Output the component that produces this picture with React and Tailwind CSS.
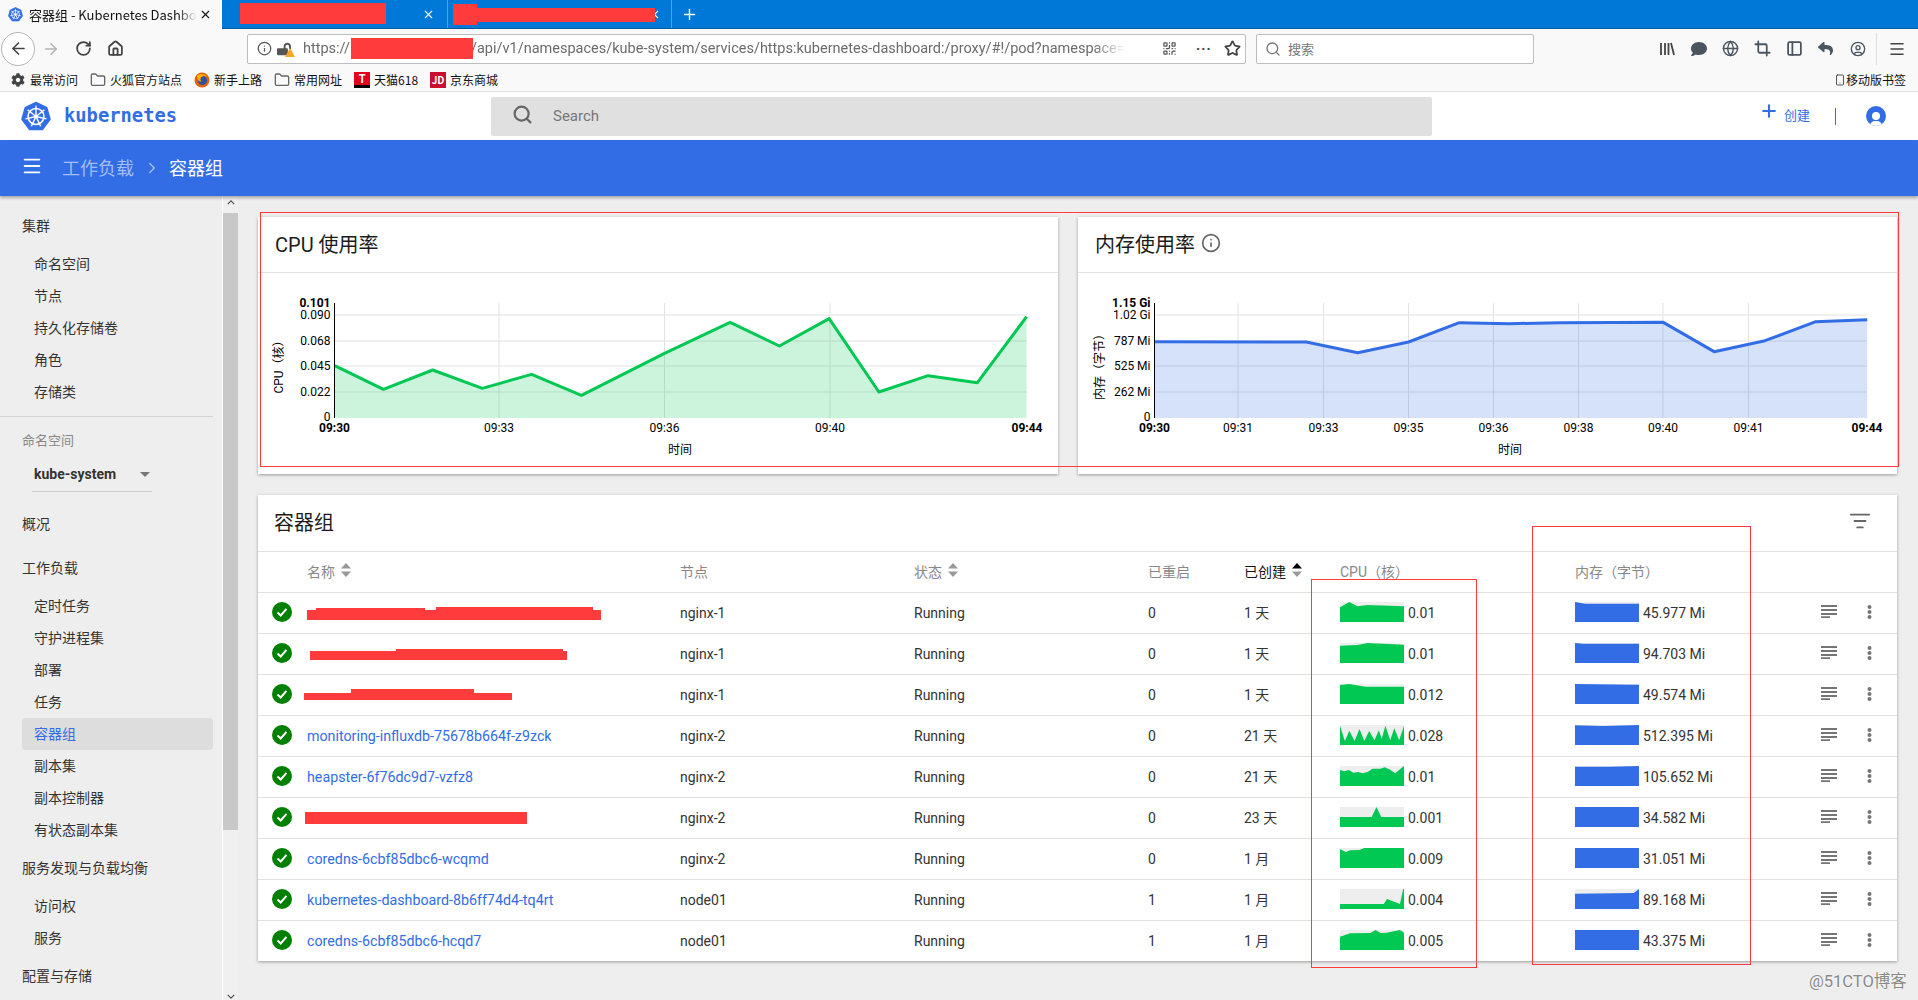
import { ArrowLeft, ArrowRight, RotateCw, Home, Info, Star, Search, Plus, X, Menu, ChevronRight, Crop, Globe, PanelLeft, Folder, Smartphone, ListFilter, QrCode, CircleUser } from 'lucide-react';
import { FaComment, FaReply, FaCog, FaLockOpen } from 'react-icons/fa';

const clusterItems = ['命名空间', '节点', '持久化存储卷', '角色', '存储类'];
const workloadItems = ['定时任务', '守护进程集', '部署', '任务', '容器组', '副本集', '副本控制器', '有状态副本集'];

const pods = [
  { name: '', node: 'nginx-1', restarts: 0, age: '1 天', cpu: '0.01', mem: '45.977 Mi', cpuShape: '0,16 23,0 43,13 68,9 158,13', memShape: '0,0 25,5 158,5' },
  { name: '', node: 'nginx-1', restarts: 0, age: '1 天', cpu: '0.01', mem: '94.703 Mi', cpuShape: '0,8 43,6 68,0 158,5', memShape: '0,0 20,2 158,2' },
  { name: '', node: 'nginx-1', restarts: 0, age: '1 天', cpu: '0.012', mem: '49.574 Mi', cpuShape: '0,3 23,0 63,8 158,8', memShape: '0,0 158,2' },
  { name: 'monitoring-influxdb-75678b664f-z9zck', node: 'nginx-2', restarts: 0, age: '21 天', cpu: '0.028', mem: '512.395 Mi', cpuShape: '0,2 12,48 23,17 36,48 48,12 60,48 72,18 85,46 96,16 103,42 112,2 124,46 134,10 146,46 158,2', memShape: '0,1 70,3 158,0' },
  { name: 'heapster-6f76dc9d7-vzfz8', node: 'nginx-2', restarts: 0, age: '21 天', cpu: '0.01', mem: '105.652 Mi', cpuShape: '0,12 10,16 22,12 33,20 45,18 56,22 68,18 80,8 100,8 110,4 122,10 136,22 158,0', memShape: '0,2 80,2 158,0' },
  { name: '', node: 'nginx-2', restarts: 0, age: '23 天', cpu: '0.001', mem: '34.582 Mi', cpuShape: '0,30 78,30 90,0 102,30 158,30', memShape: '0,0 158,0' },
  { name: 'coredns-6cbf85dbc6-wcqmd', node: 'nginx-2', restarts: 0, age: '1 月', cpu: '0.009', mem: '31.051 Mi', cpuShape: '0,4 15,12 25,7 48,6 60,0 158,0', memShape: '0,0 158,0' },
  { name: 'kubernetes-dashboard-8b6ff74d4-tq4rt', node: 'node01', restarts: 1, age: '1 月', cpu: '0.004', mem: '89.168 Mi', cpuShape: '0,45 108,45 116,30 148,45 156,0 158,0', memShape: '0,14 145,12 158,0' },
  { name: 'coredns-6cbf85dbc6-hcqd7', node: 'node01', restarts: 1, age: '1 月', cpu: '0.005', mem: '43.375 Mi', cpuShape: '0,20 25,10 75,9 88,0 100,9 115,8 148,0 158,8', memShape: '0,0 158,0' },
];

// line points read off the screenshot, page coordinates
const cpuLine = [[160, 497], [252, 568], [345, 510], [439, 565], [532, 523], [626, 586], [783, 460], [907, 367], [1000, 438], [1094, 356], [1188, 576], [1281, 527], [1374, 548], [1467, 350]]
  .map(([x, y]) => [250 + x / 1.889, 200 + y / 3]);
const memLine = [[156, 425], [437, 426], [532, 458], [626, 426], [720, 368], [813, 371], [907, 368], [1097, 367], [1191, 455], [1285, 422], [1379, 365], [1474, 359]]
  .map(([x, y]) => [1070 + x / 1.849, 200 + y / 3]);

const cpuChart = {
  viewBox: '258 273 800 201', axisX: 334.5, right: 1027, color: '#00c853', line: cpuLine, yTitle: 'CPU（核）', yTitleX: 279, xTitleX: 680,
  yTicks: [['0.101', 303, true], ['0.090', 315], ['0.068', 341], ['0.045', 366], ['0.022', 392], ['0', 417]],
  xTicks: [['09:30', 334.5, true], ['09:33', 499], ['09:36', 664.5], ['09:40', 830], ['09:44', 1027, true]],
};
const memChart = {
  viewBox: '1078 273 819 201', axisX: 1154.5, right: 1867, color: '#326de6', line: memLine, yTitle: '内存（字节）', yTitleX: 1100, xTitleX: 1510,
  yTicks: [['1.15 Gi', 303, true], ['1.02 Gi', 315], ['787 Mi', 341], ['525 Mi', 366], ['262 Mi', 392], ['0', 417]],
  xTicks: [['09:30', 1154.5, true], ['09:31', 1238], ['09:33', 1323.5], ['09:35', 1408.5], ['09:36', 1493.5], ['09:38', 1578.5], ['09:40', 1663], ['09:41', 1748.5], ['09:44', 1867, true]],
};

function KubeLogo({ className }) {
  const spokes = [0, 51.4, 102.8, 154.3, 205.7, 257.1, 308.6];
  return (
    <svg viewBox="0 0 32 32" className={className}>
      <path d="M16 1 L27.5 6.6 L31 19 L23 29.8 L9 29.8 L1 19 L4.5 6.6 Z" fill="#326de6" stroke="#326de6" strokeWidth="1.5" strokeLinejoin="round" />
      <circle cx="16" cy="16" r="8.5" fill="none" stroke="#fff" strokeWidth="1.6" />
      <circle cx="16" cy="16" r="2" fill="#fff" />
      {spokes.map((a) => (
        <line key={a} x1="16" y1="16" x2="16" y2="4.5" stroke="#fff" strokeWidth="1.5" transform={`rotate(${a} 16 16)`} />
      ))}
    </svg>
  );
}

function FirefoxIcon() {
  return (
    <svg viewBox="0 0 16 16" className="ml-[12px] w-[16px] h-[16px]">
      <circle cx="8" cy="8" r="7.5" fill="#e66000" />
      <circle cx="8.5" cy="8.5" r="4.6" fill="#2f4f9f" />
      <path d="M3 3.5 C6 1 11 1.5 13.5 5 C11 3.5 9 3.8 7.5 5 C6 6 6 8 7.5 9.5 C5 10 3 8 3 3.5 Z" fill="#ffb000" />
    </svg>
  );
}

function SortArrows({ active }) {
  return (
    <svg viewBox="0 0 10 14" className="w-[10px] h-[14px] ml-[6px] -mt-1">
      <path d="M5 0 L10 5.5 L0 5.5 Z" fill={active ? '#000' : '#999'} />
      <path d="M5 14 L10 8.5 L0 8.5 Z" fill="#999" />
    </svg>
  );
}

function UsageChart({ chart }) {
  const { viewBox, axisX, right, color, line, yTicks, xTicks } = chart;
  const points = line.map((p) => p.join(',')).join(' ');
  const area = `${line[0][0]},418 ${points} ${line[line.length - 1][0]},418`;
  return (
    <svg viewBox={viewBox} className="block w-full h-[201px] text-[12px]">
      {yTicks.slice(1, 5).map(([label, y]) => (
        <line key={label} x1={axisX} x2={right} y1={y} y2={y} stroke="#e2e2e2" />
      ))}
      {xTicks.slice(1, -1).map(([label, x]) => (
        <line key={label} x1={x} x2={x} y1={303} y2={418} stroke="#e2e2e2" />
      ))}
      <polygon points={area} fill={color} fillOpacity="0.2" />
      <polyline points={points} fill="none" stroke={color} strokeWidth="3" strokeLinejoin="round" />
      <line x1={axisX} x2={axisX} y1={303} y2={418} stroke="#000" />
      {yTicks.map(([label, y, bold]) => (
        <text key={label} x={axisX - 4} y={y + 4} textAnchor="end" fill="#000" fontWeight={bold ? 700 : 400}>{label}</text>
      ))}
      {xTicks.map(([label, x, bold]) => (
        <text key={label} x={x} y={432} textAnchor="middle" fill="#000" fontWeight={bold ? 700 : 400}>{label}</text>
      ))}
      <text x={chart.xTitleX} y={454} textAnchor="middle" fill="#000">时间</text>
      <text transform={`translate(${chart.yTitleX + 4} 364) rotate(-90)`} textAnchor="middle" fill="#000">{chart.yTitle}</text>
    </svg>
  );
}

function Sparkline({ shape, color }) {
  return (
    <svg viewBox="0 0 158 60" preserveAspectRatio="none" className="w-[64px] h-[20px] -mt-[2px] bg-[#eeeeee] shrink-0">
      <polygon points={`0,60 ${shape} 158,60`} fill={color} />
    </svg>
  );
}

function SideHeading({ children }) {
  return <div className="h-[32px] my-[6px] pl-[22px] flex items-center">{children}</div>;
}

function SideItem({ label, active }) {
  return (
    <div className={`h-[32px] ml-[22px] w-[191px] pl-[12px] flex items-center rounded-sm ${active ? 'bg-[#dddddd] text-[#326de6]' : ''}`}>
      {label}
    </div>
  );
}

function Sidebar() {
  return (
    <aside className="w-[222px] shrink-0 pt-[8px] flex flex-col text-[14px] text-[#333333]">
      <SideHeading>集群</SideHeading>
      {clusterItems.map((i) => <SideItem key={i} label={i} />)}
      <div className="mt-[8px] h-px w-[213px] bg-[#d4d4d4]" />
      <div className="mt-[8px] h-[32px] pl-[22px] flex items-center text-[13px] text-[#888888]">命名空间</div>
      <div className="ml-[32px] w-[120px] h-[35px] pl-[2px] pr-[2px] flex items-center justify-between border-b border-[#cccccc] font-bold">
        <span>kube-system</span>
        <span className="w-0 h-0 border-x-[5px] border-x-transparent border-t-[5px] border-t-[#777777]" />
      </div>
      <div className="mt-[10px]" />
      <SideHeading>概况</SideHeading>
      <SideHeading>工作负载</SideHeading>
      {workloadItems.map((i) => <SideItem key={i} label={i} active={i === '容器组'} />)}
      <SideHeading>服务发现与负载均衡</SideHeading>
      <SideItem label="访问权" />
      <SideItem label="服务" />
      <SideHeading>配置与存储</SideHeading>
    </aside>
  );
}

function Scrollbar() {
  return (
    <div className="w-[16px] shrink-0 border-l border-white bg-[#f0f0f0] flex flex-col items-center">
      <svg viewBox="0 0 10 6" className="w-[8px] h-[5px] mt-[4px] mb-[8px]"><path d="M1 5 L5 1 L9 5" fill="none" stroke="#555" strokeWidth="1.6" /></svg>
      <div className="w-full h-[617px] bg-[#c8c8c8]" />
      <div className="flex-1" />
      <svg viewBox="0 0 10 6" className="w-[8px] h-[5px] mb-[1px]"><path d="M1 1 L5 5 L9 1" fill="none" stroke="#555" strokeWidth="1.6" /></svg>
    </div>
  );
}

function Card({ title, extra, className, children }) {
  return (
    <section className={`bg-white shadow-[0_1px_3px_rgba(0,0,0,0.35)] ${className}`}>
      <div className="h-[56px] pl-[17px] flex items-center gap-[6px] border-b border-[#e2e2e2] text-[20px] text-[#1c1c1c]">
        <span>{title}</span>
        {extra}
      </div>
      {children}
    </section>
  );
}

function PodTable() {
  const grid = 'grid grid-cols-[49px_373px_234px_234px_96px_96px_235px_246px_48px_1fr] items-center';
  return (
    <section className="relative bg-white shadow-[0_1px_3px_rgba(0,0,0,0.35)] text-[14px]">
      <div className="h-[56px] pl-[16px] flex items-center text-[20px] text-[#1c1c1c]">容器组</div>
      <ListFilter className="absolute right-[26px] top-[15px] w-[22px] h-[22px] text-[#666666]" />
      <div className={`${grid} h-[41px] border-t border-[#e0e0e0] text-[#888888]`}>
        <div />
        <div className="flex items-center">名称<SortArrows /></div>
        <div>节点</div>
        <div className="flex items-center">状态<SortArrows /></div>
        <div>已重启</div>
        <div className="flex items-center text-[#111111]">已创建<SortArrows active /></div>
        <div>CPU（核）</div>
        <div>内存（字节）</div>
        <div />
        <div />
      </div>
      {pods.map((p, i) => (
        <div key={i} className={`${grid} h-[41px] border-t border-[#e0e0e0] text-[#333333]`}>
          <div className="pl-[14px]">
            <span className="w-[20px] h-[20px] rounded-full bg-[#008000] flex items-center justify-center -mt-[3px]">
              <svg viewBox="0 0 12 12" className="w-[12px] h-[12px]"><path d="M1.5 6.5 L4.7 9.5 L10.5 2.8" fill="none" stroke="#fff" strokeWidth="2" /></svg>
            </span>
          </div>
          <div className="pt-[2px] text-[14.25px] text-[#326de6]">{p.name}</div>
          <div>{p.node}</div>
          <div>Running</div>
          <div>{p.restarts}</div>
          <div>{p.age}</div>
          <div className="flex items-center gap-[4px]"><Sparkline shape={p.cpuShape} color="#00c853" />{p.cpu}</div>
          <div className="flex items-center gap-[4px]"><Sparkline shape={p.memShape} color="#326de6" />{p.mem}</div>
          <svg viewBox="0 0 16 13" className="w-[16px] h-[13px] -mt-[3px]">
            <path d="M0 1 H16 M0 5 H16 M0 9 H16 M0 12.2 H9" stroke="#757575" strokeWidth="1.8" />
          </svg>
          <svg viewBox="0 0 5 14" className="w-[5px] h-[14px] -mt-[3px] -ml-[2px]">
            <circle cx="2.5" cy="2" r="2" fill="#757575" /><circle cx="2.5" cy="7" r="2" fill="#757575" /><circle cx="2.5" cy="12" r="2" fill="#757575" />
          </svg>
        </div>
      ))}
    </section>
  );
}

function BrowserChrome() {
  return (
    <div className="font-['Noto_Sans_CJK_SC','Noto_Sans',sans-serif] text-[12px] text-[#111111]">
      {/* tab strip */}
      <div className="h-[29px] bg-[#0078d7] border-b border-[#005a9e] flex items-stretch text-white">
        <div className="w-[222px] h-[29px] bg-[#f9f9f9] text-[#111111] flex items-center pl-[8px] pr-[10px]">
          <KubeLogo className="w-[15px] h-[15px] shrink-0" />
          <span className="ml-[6px] w-[168px] overflow-hidden whitespace-nowrap text-[13px] [mask-image:linear-gradient(to_right,black_88%,transparent)]">容器组 - Kubernetes Dashboard</span>
          <X className="w-[13px] h-[13px] ml-auto shrink-0" />
        </div>
        <div className="w-[226px] flex items-center justify-end pr-[12px] border-r border-[#4da0e3]"><X className="w-[13px] h-[13px]" /></div>
        <div className="w-[224px] flex items-center justify-end pr-[10px] border-r border-[#4da0e3]"><X className="w-[13px] h-[13px]" /></div>
        <div className="pl-[9px] flex items-center"><Plus className="w-[17px] h-[17px]" /></div>
      </div>
      {/* nav toolbar */}
      <div className="h-[39px] bg-[#f9f9f9] flex items-center">
        <div className="ml-[1px] w-[34px] h-[34px] rounded-full border border-[#b5b5b5] bg-white flex items-center justify-center">
          <ArrowLeft className="w-[19px] h-[19px] text-[#444444]" />
        </div>
        <ArrowRight className="ml-[7px] w-[18px] h-[18px] text-[#b3b3b3]" />
        <RotateCw className="ml-[15px] w-[17px] h-[17px] text-[#444444]" strokeWidth={2.5} />
        <Home className="ml-[15px] w-[17px] h-[17px] text-[#444444]" strokeWidth={2.5} />
        <div className="ml-[123px] w-[999px] h-[30px] bg-white border border-[#bdbdbd] rounded-[2px] flex items-center pl-[9px] text-[14.5px] text-[#6b6b6b] font-['Roboto',sans-serif]">
          <Info className="w-[15px] h-[15px] shrink-0 text-[#555555]" />
          <FaLockOpen className="ml-[5px] w-[14px] h-[14px] shrink-0 text-[#555555]" />
          <span className="w-0 h-0 -mb-[7px] -ml-[6px] border-x-[5px] border-x-transparent border-b-[9px] border-b-[#f5a623]" />
          <span className="ml-[8px] pt-[1px] whitespace-nowrap overflow-hidden w-[823px] [mask-image:linear-gradient(to_right,black_96%,transparent)]">https://<span className="inline-block w-[121px]" />/api/v1/namespaces/kube-system/services/https:kubernetes-dashboard:/proxy/#!/pod?namespace=</span>
          <QrCode className="ml-[36px] w-[15px] h-[15px] shrink-0 text-[#555555]" />
          <span className="ml-[19px] text-[#444444] font-bold tracking-[1px] -mt-[6px]">...</span>
          <Star className="ml-[12px] w-[17px] h-[17px] shrink-0 text-[#444444]" strokeWidth={2.5} />
        </div>
        <div className="ml-[10px] w-[278px] h-[30px] bg-white border border-[#bdbdbd] rounded-[2px] flex items-center pl-[8px] text-[13px] text-[#777777]">
          <Search className="w-[16px] h-[16px] text-[#777777]" />
          <span className="ml-[7px]">搜索</span>
        </div>
        <svg viewBox="0 0 16 16" className="ml-[125px] w-[16px] h-[16px]"><path d="M2 2 V14 M6 2 V14 M9.5 2 V14 M12 2 L15 14" stroke="#444" strokeWidth="1.8" fill="none" /></svg>
        <FaComment className="ml-[16px] w-[16px] h-[16px] text-[#4a5560]" />
        <Globe className="ml-[15px] w-[17px] h-[17px] text-[#4a5560]" />
        <Crop className="ml-[15px] w-[17px] h-[17px] text-[#4a5560]" strokeWidth={2.5} />
        <PanelLeft className="ml-[15px] w-[17px] h-[17px] text-[#4a5560]" strokeWidth={2.5} />
        <FaReply className="ml-[15px] w-[15px] h-[15px] text-[#4a5560]" />
        <CircleUser className="ml-[17px] w-[16px] h-[16px] text-[#4a5560]" />
        <div className="ml-[10px] w-px h-[32px] bg-[#dddddd]" />
        <Menu className="ml-[11px] w-[18px] h-[18px] text-[#444444]" />
      </div>
      {/* bookmarks */}
      <div className="h-[24px] bg-[#f9f9f9] border-b border-[#dcdcdc] flex items-center">
        <FaCog className="ml-[11px] w-[14px] h-[14px] text-[#444444]" />
        <span className="ml-[5px]">最常访问</span>
        <Folder className="ml-[12px] w-[16px] h-[16px] text-[#666666]" />
        <span className="ml-[4px]">火狐官方站点</span>
        <FirefoxIcon />
        <span className="ml-[4px]">新手上路</span>
        <Folder className="ml-[12px] w-[16px] h-[16px] text-[#666666]" />
        <span className="ml-[4px]">常用网址</span>
        <span className="ml-[12px] w-[16px] h-[16px] bg-[#e2001a] border-b-[3px] border-black flex items-center justify-center text-white font-bold text-[11px] leading-none">T</span>
        <span className="ml-[4px]">天猫618</span>
        <span className="ml-[12px] w-[16px] h-[16px] bg-[#c8102e] flex items-center justify-center text-white font-bold text-[10px] leading-none">JD</span>
        <span className="ml-[4px]">京东商城</span>
        <Smartphone className="ml-auto w-[12px] h-[16px] text-[#555555]" />
        <span className="mr-[12px]">移动版书签</span>
      </div>
    </div>
  );
}

export default function App() {
  return (
    <div className="relative w-[1918px] h-[1000px] overflow-hidden bg-[#eeeeee] font-['Roboto','Noto_Sans_CJK_SC',sans-serif]">
      <BrowserChrome />

      <header className="h-[48px] bg-white flex items-center">
        <KubeLogo className="ml-[21px] w-[30px] h-[31px]" />
        <span className="ml-[13px] w-[113px] pt-[1px] font-['DejaVu_Sans_Mono',monospace] font-bold text-[18.8px] text-[#326de6]">kubernetes</span>
        <div className="ml-[314px] w-[941px] h-[39px] bg-[#e0e0e0] rounded-[2px] flex items-center pl-[21px] text-[15px] text-[#777777]">
          <Search className="w-[21px] h-[21px] text-[#666666] -mt-[4px]" strokeWidth={2.5} />
          <span className="ml-[20px]">Search</span>
        </div>
        <Plus className="ml-[327px] w-[20px] h-[20px] text-[#326de6] -mt-[10px]" strokeWidth={2.5} />
        <span className="ml-[5px] text-[13px] text-[#326de6]">创建</span>
        <div className="ml-[25px] w-px h-[17px] bg-[#326de6]" />
        <div className="ml-[30px] w-[20px] h-[20px] rounded-full bg-[#326de6] flex flex-col items-center justify-end overflow-hidden">
          <span className="w-[8px] h-[8px] rounded-full bg-white mb-[1px]" />
          <span className="w-[12px] h-[5px] rounded-t-full bg-white" />
        </div>
      </header>

      <div className="relative h-[56px] bg-[#326de6] shadow-[0_2px_3px_rgba(0,0,0,0.3)] flex items-center text-[18px] text-white">
        <Menu className="ml-[21px] w-[22px] h-[22px] -mt-[5px]" />
        <span className="ml-[19px] text-[#a3bef5]">工作负载</span>
        <ChevronRight className="ml-[9px] w-[18px] h-[18px] text-[#a3bef5]" />
        <span className="ml-[8px]">容器组</span>
      </div>

      <div className="flex h-[804px]">
        <Sidebar />
        <Scrollbar />
        <main className="flex-1 pl-[20px] pr-[21px] pt-[21px]">
          <div className="flex gap-[20px] mb-[21px]">
            <Card title="CPU 使用率" className="w-[800px] shrink-0">
              <UsageChart chart={cpuChart} />
            </Card>
            <Card title="内存使用率" className="flex-1" extra={<Info className="w-[20px] h-[20px] text-[#666666] -mt-[3px]" />}>
              <UsageChart chart={memChart} />
            </Card>
          </div>
          <PodTable />
        </main>
      </div>

      {/* red redaction blocks and annotation frames drawn over the screenshot */}
      <div className="absolute left-[240px] top-[3px] w-[146px] h-[21px] bg-[#ff3b3b]" />
      <div className="absolute left-[453px] top-[4px] w-[24px] h-[21px] bg-[#ff3b3b]" />
      <div className="absolute left-[477px] top-[8px] w-[178px] h-[14px] bg-[#ff3b3b]" />
      <div className="absolute left-[351px] top-[38px] w-[122px] h-[21px] bg-[#ff3b3b]" />
      <div className="absolute left-[307px] top-[610px] w-[294px] h-[10px] bg-[#ff3b3b]" />
      <div className="absolute left-[316px] top-[608px] w-[109px] h-[3px] bg-[#ff3b3b]" />
      <div className="absolute left-[436px] top-[607px] w-[157px] h-[4px] bg-[#ff3b3b]" />
      <div className="absolute left-[310px] top-[651px] w-[257px] h-[9px] bg-[#ff3b3b]" />
      <div className="absolute left-[396px] top-[649px] w-[167px] h-[3px] bg-[#ff3b3b]" />
      <div className="absolute left-[304px] top-[693px] w-[208px] h-[7px] bg-[#ff3b3b]" />
      <div className="absolute left-[351px] top-[689px] w-[123px] h-[5px] bg-[#ff3b3b]" />
      <div className="absolute left-[305px] top-[812px] w-[222px] h-[12px] bg-[#ff3b3b]" />
      <div className="absolute left-[260px] top-[212px] w-[1639px] h-[255px] border border-[#ff3b3b]" />
      <div className="absolute left-[1311px] top-[579px] w-[166px] h-[389px] border border-[#ff3b3b]" />
      <div className="absolute left-[1532px] top-[526px] w-[219px] h-[439px] border border-[#ff3b3b]" />

      <div className="absolute left-[1809px] top-[970px] text-[16.5px] text-[#8a8a8a] [text-shadow:0_0_2px_#fff]">@51CTO博客</div>
    </div>
  );
}
